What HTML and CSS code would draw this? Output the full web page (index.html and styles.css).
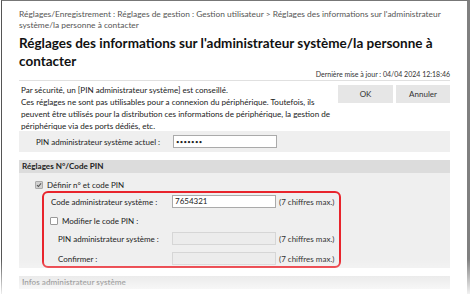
FILE: index.html
```html
<!DOCTYPE html>
<html lang="fr">
<head>
<meta charset="utf-8">
<link rel="stylesheet" href="styles.css">
</head>
<body>
<div class="frame">
  <div class="crumb">Réglages/Enregistrement : Réglages de gestion : Gestion utilisateur &gt; Réglages des informations sur l'administrateur<br>système/la personne à contacter</div>
  <h1 class="title">Réglages des informations sur l'administrateur système/la personne à<br>contacter</h1>
  <div class="updated">Dernière mise à jour : 04/04 2024 12:18:46</div>
  <div class="intro">
    <p class="note">Par sécurité, un [PIN administrateur système] est conseillé.<br>Ces réglages ne sont pas utilisables pour a connexion du périphérique. Toutefois, ils<br>peuvent être utilisés pour la distribution ces informations de périphérique, la gestion de<br>périphérique via des ports dédiés, etc.</p>
    <div class="buttons">
      <button class="btn ok">OK</button>
      <button class="btn">Annuler</button>
    </div>
  </div>
  <div class="pinrow">
    <span class="pinlabel">PIN administrateur système actuel :</span>
    <span class="input pw">•••••••</span>
  </div>
  <div class="section">
    <div class="sechead">Réglages N°/Code PIN</div>
    <div class="secbody">
      <div class="check-row"><span class="cb checked"><svg viewBox="0 0 8 8" width="8" height="8"><path d="M1.3 4.2 L3.2 6 L6.8 1.8" fill="none" stroke="#555" stroke-width="1.4"/></svg></span>Définir n° et code PIN</div>
      <div class="redbox">
        <div class="field">
          <span class="flabel">Code administrateur système :</span>
          <span class="input">7654321</span>
          <span class="hint">(7 chiffres max.)</span>
        </div>
        <div class="check-row sub"><span class="cb"></span>Modifier le code PIN :</div>
        <div class="field ind">
          <span class="flabel">PIN administrateur système :</span>
          <span class="input dis"></span>
          <span class="hint">(7 chiffres max.)</span>
        </div>
        <div class="field ind">
          <span class="flabel">Confirmer :</span>
          <span class="input dis"></span>
          <span class="hint">(7 chiffres max.)</span>
        </div>
      </div>
    </div>
  </div>
  <div class="section last">
    <div class="sechead">Infos administrateur système</div>
  </div>
  <div class="fade"></div>
</div>
</body>
</html>
```
FILE: styles.css
```css
html, body {
  margin: 0;
  padding: 0;
  background: #fff;
}
body {
  width: 470px;
  height: 294px;
  overflow: hidden;
  font-family: Lato, "Noto Sans", sans-serif;
  color: #333;
  white-space: nowrap;
}
.frame {
  position: relative;
  margin-left: 1px;
  height: 300px;
  border-left: 1px solid #555;
  border-top: 1px solid #777;
  border-right: 3px solid #808080;
  padding: 8px 17px 0 17px;
  box-sizing: border-box;
}
.crumb {
  font-size: 8.4px;
  line-height: 11px;
  color: #555;
}
.title {
  margin: 3px 0 0;
  font-size: 13.5px;
  line-height: 18px;
  font-weight: bold;
  color: #111;
}
.updated {
  margin-top: 0;
  text-align: right;
  font-size: 7px;
  line-height: 9px;
  color: #333;
  border-bottom: 1px solid #e0e0e0;
  padding-bottom: 1px;
}
.intro {
  display: flex;
  justify-content: space-between;
  align-items: flex-start;
  margin-top: 4px;
}
.note {
  margin: -1px 0 0 2px;
  font-size: 8.1px;
  line-height: 12px;
  color: #222;
}
.buttons {
  display: flex;
  gap: 3px;
}
.btn {
  height: 18px;
  border: none;
  background: #e6e6e6;
  font-family: inherit;
  font-size: 8px;
  color: #333;
  padding: 0;
}
.btn.ok { width: 55px; }
.btn:not(.ok) { width: 54px; }
.pinrow {
  margin-top: -1px;
  height: 21px;
  background: #efefef;
  display: flex;
  align-items: center;
}
.pinlabel {
  margin-left: 17px;
  width: 137px;
  font-size: 8px;
  color: #222;
}
.input {
  box-sizing: border-box;
  width: 104px;
  height: 13px;
  background: #fff;
  border: 1px solid #aaa;
  font-size: 8px;
  line-height: 11px;
  padding-left: 2px;
  color: #222;
}
.input.pw {
  font-size: 6px;
  letter-spacing: 0.3px;
}
.input.dis {
  background: #ececec;
  border-color: #d6d6d6;
}
.section {
  margin-top: 8px;
}
.sechead {
  height: 13px;
  background: #dcdcdc;
  font-size: 8.1px;
  line-height: 13px;
  font-weight: bold;
  padding-left: 3px;
  color: #222;
}
.secbody {
  background: #efefef;
  padding: 6px 0 0 0;
  height: 95px;
  box-sizing: border-box;
}
.check-row {
  display: flex;
  align-items: center;
  height: 12px;
  margin-left: 16px;
  font-size: 8px;
  color: #222;
}
.cb {
  box-sizing: border-box;
  width: 8px;
  height: 8px;
  border: 1px solid #999;
  background: #fff;
  margin-right: 4px;
  display: flex;
  align-items: center;
  justify-content: center;
  border-radius: 1px;
}
.cb.checked {
  background: #d0d0d0;
  border-color: #aaa;
}
.cb svg { display: block; }
.redbox {
  margin: 0 0 0 23px;
  width: 299px;
  height: 77px;
  box-sizing: border-box;
  border: 2px solid #e8242c;
  border-radius: 6px;
  padding-top: 2px;
}
.field {
  display: flex;
  align-items: center;
  height: 13px;
  font-size: 8px;
  color: #222;
}
.field .flabel {
  margin-left: 7px;
  width: 121px;
}
.field.ind .flabel {
  margin-left: 14px;
  width: 114px;
}
.hint {
  margin-left: 3px;
  font-size: 8px;
  color: #333;
}
.check-row.sub {
  margin: 7px 0 0 6px;
}
.field.ind {
  margin-top: 5px;
}
.field.ind + .field.ind {
  margin-top: 7px;
}
.section.last {
  margin-top: 8px;
}
.fade {
  position: absolute;
  left: -2px;
  right: -4px;
  top: 258px;
  height: 42px;
  background: linear-gradient(to bottom, rgba(255,255,255,0) 0%, rgba(255,255,255,0.95) 88%, #fff 100%);
}
```
